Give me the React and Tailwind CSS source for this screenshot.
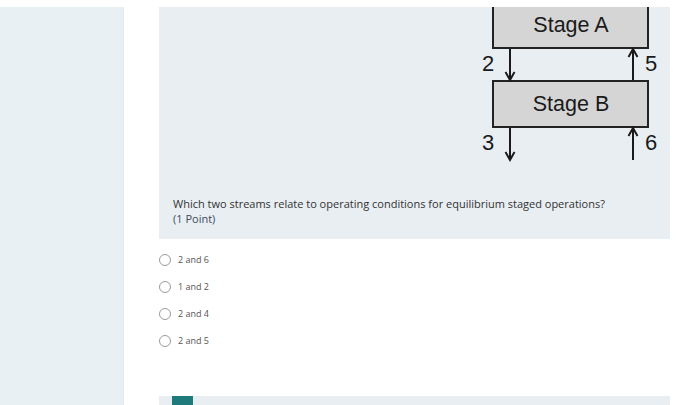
export default function App() {
  const options = ["2 and 6", "1 and 2", "2 and 4", "2 and 5"];
  return (
    <div className="w-[700px] h-[405px] overflow-hidden bg-white flex flex-col" style={{ fontFamily: '"Open Sans", "Noto Sans", sans-serif' }}>
      <div className="h-[7px] shrink-0 bg-white" />
      <div className="flex flex-1 min-h-0">
        <div className="w-[124px] shrink-0 bg-[#e9f0f4] border-r border-[#e2e9ed]" />
        <div className="w-[35px] shrink-0 bg-white" />
        <div className="w-[511px] shrink-0 flex flex-col">
          <div className="h-[232px] shrink-0 bg-[#e8eef2] flex flex-col">
            <svg width="190" height="160" viewBox="0 0 190 160" className="ml-[316px] shrink-0" style={{ fontFamily: '"Liberation Sans", Arial, sans-serif' }}>
              <rect x="18" y="-10" width="155" height="51" fill="#d5d5d5" stroke="#222" strokeWidth="2" />
              <text x="96" y="25" textAnchor="middle" fontSize="21.5" fill="#1a1a1a">Stage A</text>
              <rect x="18" y="74" width="155" height="46" fill="#d5d5d5" stroke="#222" strokeWidth="2" />
              <text x="96" y="104" textAnchor="middle" fontSize="21.5" fill="#1a1a1a">Stage B</text>
              <line x1="35" y1="42" x2="35" y2="72" stroke="#1a1a1a" strokeWidth="2" />
              <path d="M30.5 65 L35 73 L39.5 65" fill="none" stroke="#1a1a1a" strokeWidth="2" />
              <line x1="158" y1="73" x2="158" y2="43" stroke="#1a1a1a" strokeWidth="2" />
              <path d="M153.5 50 L158 42 L162.5 50" fill="none" stroke="#1a1a1a" strokeWidth="2" />
              <line x1="35" y1="121" x2="35" y2="152" stroke="#1a1a1a" strokeWidth="2" />
              <path d="M30.5 145 L35 153 L39.5 145" fill="none" stroke="#1a1a1a" strokeWidth="2" />
              <line x1="158" y1="153" x2="158" y2="122" stroke="#1a1a1a" strokeWidth="2" />
              <path d="M153.5 129 L158 121 L162.5 129" fill="none" stroke="#1a1a1a" strokeWidth="2" />
              <text x="13" y="64" textAnchor="middle" fontSize="22" fill="#1a1a1a">2</text>
              <text x="176" y="64" textAnchor="middle" fontSize="22" fill="#1a1a1a">5</text>
              <text x="13" y="143" textAnchor="middle" fontSize="22" fill="#1a1a1a">3</text>
              <text x="176" y="143" textAnchor="middle" fontSize="22" fill="#1a1a1a">6</text>
            </svg>
            <div className="mt-[29px] pl-[14px] text-[11px] leading-[15px] text-[#333]">
              <div>Which two streams relate to operating conditions for equilibrium staged operations?</div>
              <div className="text-[#3d4b5c]">(1 Point)</div>
            </div>
          </div>
          <div className="mt-[7px] flex flex-col">
            {options.map((o) => (
              <div key={o} className="h-[27px] flex items-center gap-[7px]">
                <div className="w-[12px] h-[12px] rounded-full border border-[#9a9a9a] bg-white" />
                <span className="text-[9px] text-[#555]">{o}</span>
              </div>
            ))}
          </div>
          <div className="mt-[42px] h-[10px] bg-[#e8eef2] pl-[13px]">
            <div className="w-[21px] h-full bg-[#1f7a7c]" />
          </div>
        </div>
        <div className="flex-1 bg-white" />
      </div>
    </div>
  );
}
